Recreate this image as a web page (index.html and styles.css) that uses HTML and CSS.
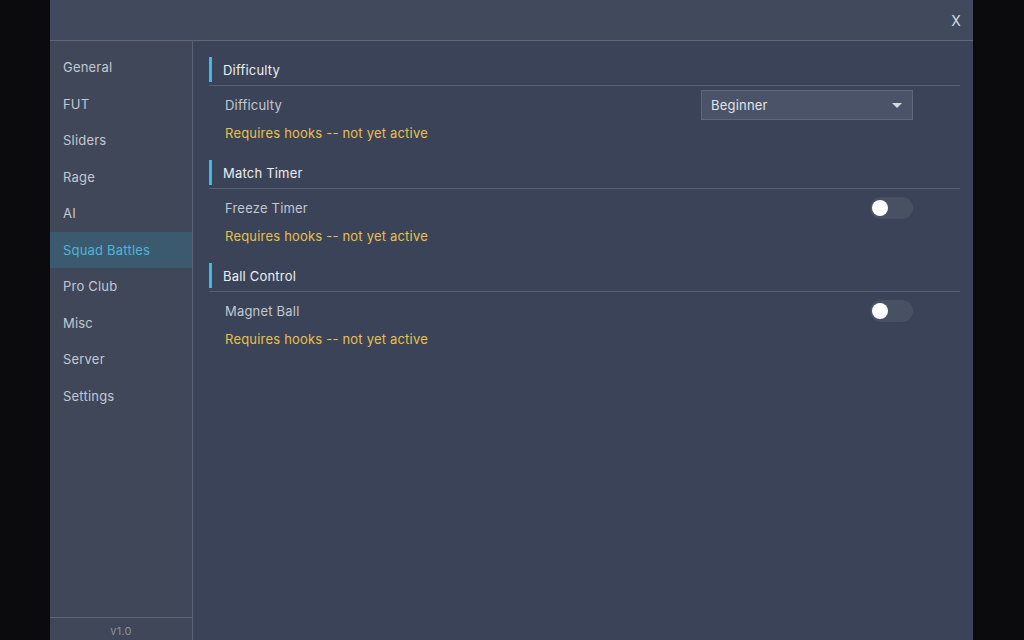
FILE: index.html
```html
<!DOCTYPE html>
<html>
<head>
<meta charset="utf-8">
<link rel="stylesheet" href="styles.css">
</head>
<body>
<div class="app">
  <div class="titlebar"><span class="close">X</span></div>
  <div class="main">
    <nav class="sidebar">
      <ul class="nav">
        <li class="nav-item">General</li>
        <li class="nav-item">FUT</li>
        <li class="nav-item">Sliders</li>
        <li class="nav-item">Rage</li>
        <li class="nav-item">AI</li>
        <li class="nav-item active">Squad Battles</li>
        <li class="nav-item">Pro Club</li>
        <li class="nav-item">Misc</li>
        <li class="nav-item">Server</li>
        <li class="nav-item">Settings</li>
      </ul>
      <div class="version">v1.0</div>
    </nav>
    <main class="content">
      <section class="section">
        <h2 class="section-title">Difficulty</h2>
        <div class="row">
          <span class="label">Difficulty</span>
          <div class="select"><span>Beginner</span><span class="caret"></span></div>
        </div>
        <div class="warn">Requires hooks -- not yet active</div>
      </section>
      <section class="section">
        <h2 class="section-title">Match Timer</h2>
        <div class="row">
          <span class="label">Freeze Timer</span>
          <div class="toggle"><span class="knob"></span></div>
        </div>
        <div class="warn">Requires hooks -- not yet active</div>
      </section>
      <section class="section">
        <h2 class="section-title">Ball Control</h2>
        <div class="row">
          <span class="label">Magnet Ball</span>
          <div class="toggle"><span class="knob"></span></div>
        </div>
        <div class="warn">Requires hooks -- not yet active</div>
      </section>
    </main>
  </div>
</div>
</body>
</html>
```
FILE: styles.css
```css
* { box-sizing: border-box; }
html, body { margin: 0; padding: 0; }
body {
  background: #0b0b0d;
  font-family: Inter, "Noto Sans", "Liberation Sans", sans-serif;
  font-size: 13px;
  letter-spacing: 0.2px;
  height: 640px;
  overflow: hidden;
}
.app {
  width: 923px;
  height: 640px;
  margin-left: 50px;
  display: flex;
  flex-direction: column;
  background: #3a4358;
}
.titlebar {
  height: 41px;
  flex: none;
  background: #414a5d;
  border-bottom: 1px solid #5f6779;
  display: flex;
  justify-content: flex-end;
  align-items: flex-start;
  padding: 12px 12px 0 0;
}
.close {
  color: #d6dae2;
  font-size: 14px;
  line-height: 18px;
}
.main {
  flex: 1;
  display: flex;
  min-height: 0;
}
.sidebar {
  width: 143px;
  flex: none;
  background: #3f4759;
  border-right: 1px solid #5a6274;
  display: flex;
  flex-direction: column;
}
.nav {
  list-style: none;
  margin: 0;
  padding: 8px 0 0;
  flex: 1;
}
.nav-item {
  height: 36.5px;
  line-height: 36.5px;
  padding-left: 13px;
  color: #c3c8d2;
}
.nav-item.active {
  background: #3b596f;
  color: #4fb6d6;
}
.version {
  height: 23px;
  border-top: 1px solid #5d6577;
  text-align: center;
  color: #8a92a2;
  font-size: 11px;
  line-height: 27px;
}
.content {
  flex: 1;
  padding: 16px 13px 0 16px;
  display: flex;
  flex-direction: column;
  gap: 19px;
}
.section-title {
  margin: 0;
  font-size: 13px;
  font-weight: 400;
  color: #eceef2;
  height: 29px;
  padding-bottom: 3px;
  border-bottom: 1px solid #586073;
  position: relative;
  padding-left: 14px;
  line-height: 27px;
}
.section-title::before {
  content: "";
  position: absolute;
  left: 0;
  top: 0;
  width: 3px;
  height: 25px;
  background: #3dbde6;
}
.row {
  margin-top: 4px;
  height: 30px;
  display: flex;
  align-items: center;
  justify-content: space-between;
  padding-left: 16px;
  padding-right: 47px;
}
.label { color: #c3c8d2; }
.warn {
  margin-top: 5px;
  padding-left: 16px;
  color: #e9c04b;
  line-height: 16px;
}
.select {
  width: 212px;
  height: 30px;
  background: #4a5367;
  border: 1px solid #5f687b;
  display: flex;
  align-items: center;
  justify-content: space-between;
  padding: 0 10px 0 9px;
  color: #e2e5ea;
}
.caret {
  width: 0;
  height: 0;
  border-left: 5px solid transparent;
  border-right: 5px solid transparent;
  border-top: 5px solid #d4d8e0;
}
.toggle {
  width: 43px;
  height: 22px;
  border-radius: 11px;
  background: #485064;
  display: flex;
  align-items: center;
  padding-left: 2px;
}
.knob {
  width: 16px;
  height: 16px;
  border-radius: 50%;
  background: #ffffff;
}
```
